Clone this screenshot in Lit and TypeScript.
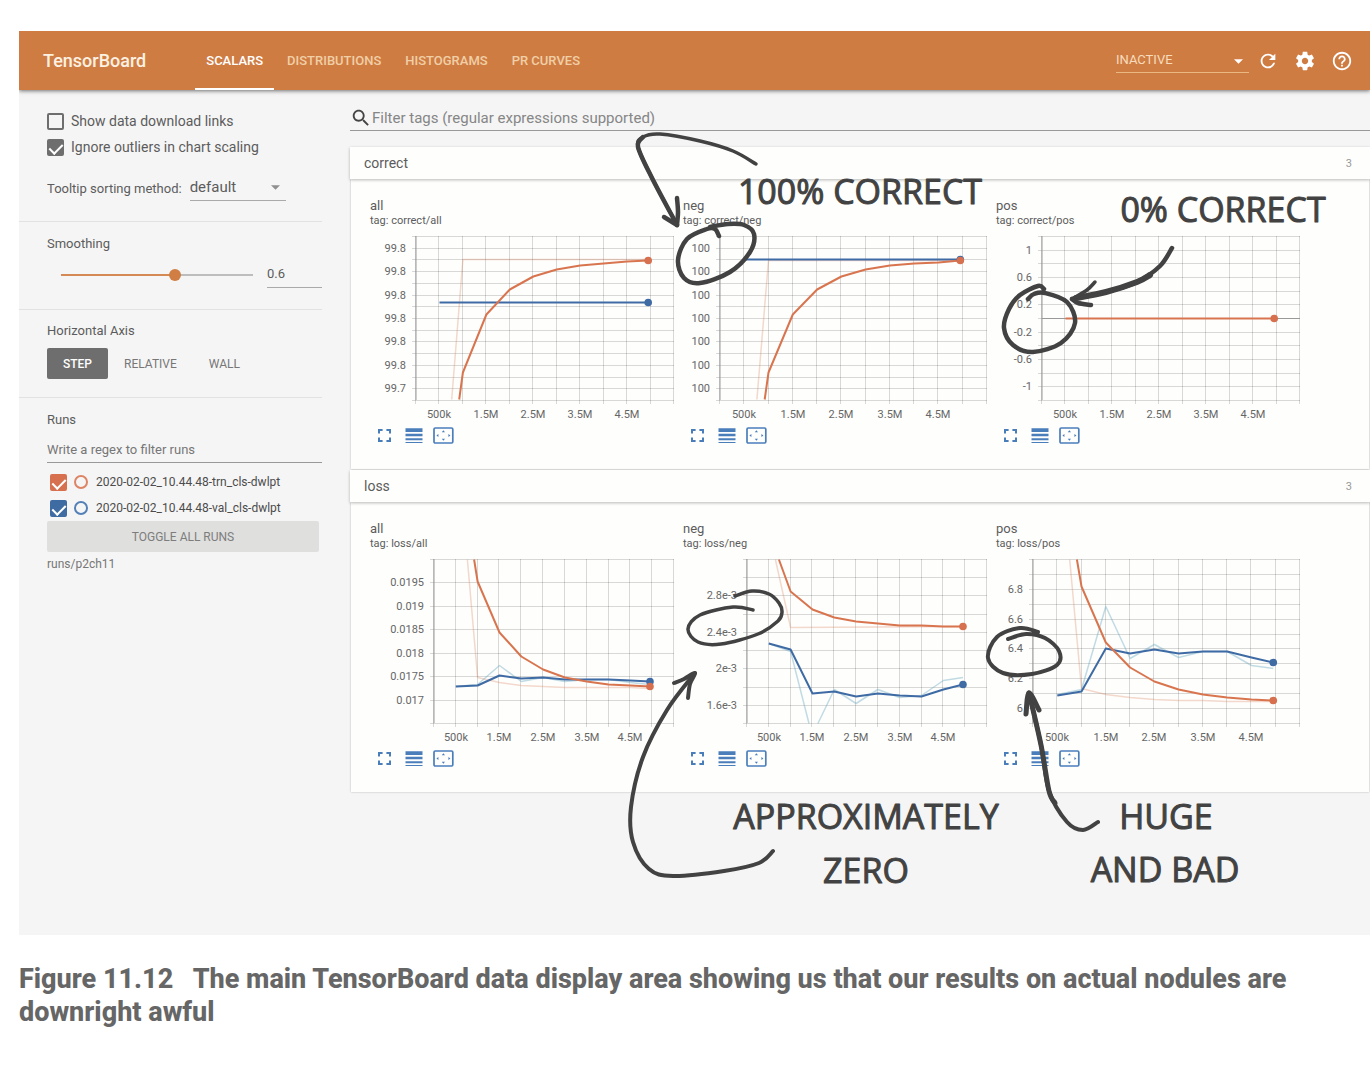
import { LitElement, html, svg, css } from "lit";
import { customElement, property, state } from "lit/decorators.js";
import { classMap } from "lit/directives/class-map.js";

type Pt = [number, number];

interface Line {
  kind: "train" | "val";
  faint?: boolean;
  pts: Pt[];
}

interface ChartSpec {
  name: string;
  left: number;
  steps: number;
  ticks: [number, string][];
  zero?: number;
  lines: Line[];
}

/** Pairs consecutive y values with the step index 1, 2, 3 ... and the last recorded step. */
const run = (first: number, ys: number[]): Pt[] =>
  ys.map((y, i): Pt => [i === ys.length - 1 ? 9.9 : first + i, y]);

const every = (labels: string[], start: number, by: number): [number, string][] =>
  labels.map((l, i): [number, string] => [start + i * by, l]);

const SECTIONS: { title: string; charts: ChartSpec[] }[] = [
  {
    title: "correct",
    charts: [
      {
        name: "all",
        left: 46,
        steps: 14,
        ticks: every(["99.8", "99.8", "99.8", "99.8", "99.8", "99.8", "99.7"], 1, 2),
        lines: [
          { kind: "train", faint: true, pts: [[1.52, 163], [2, 23], [9.9, 23]] },
          { kind: "val", pts: [[1, 66], [9.9, 66]] },
          { kind: "train", pts: [[1.84, 163], ...run(2, [136, 78, 53, 40, 33, 29, 27, 25, 24])] },
        ],
      },
      {
        name: "neg",
        left: 37,
        steps: 14,
        ticks: every(["100", "100", "100", "100", "100", "100", "100"], 1, 2),
        lines: [
          { kind: "train", faint: true, pts: [[1.52, 163], [2, 24], [9.9, 24]] },
          { kind: "val", pts: [[1, 23], [9.9, 23]] },
          { kind: "train", pts: [[1.84, 163], ...run(2, [136, 78, 53, 40, 33, 29, 27, 26, 24])] },
        ],
      },
      {
        name: "pos",
        left: 46,
        steps: 12,
        zero: 82,
        ticks: every(["1", "0.6", "0.2", "-0.2", "-0.6", "-1"], 1, 2),
        lines: [{ kind: "train", pts: [[1, 82], [9.9, 82]] }],
      },
    ],
  },
  {
    title: "loss",
    charts: [
      {
        name: "all",
        left: 64,
        steps: 7,
        ticks: every(["0.0195", "0.019", "0.0185", "0.018", "0.0175", "0.017"], 1, 1),
        lines: [
          { kind: "train", faint: true, pts: [[1.53, 0], ...run(2, [118, 123, 126, 127, 128, 128, 128, 128, 129])] },
          { kind: "val", faint: true, pts: run(1, [127, 125, 106, 122, 118, 122, 120, 120, 123, 125]) },
          { kind: "val", pts: run(1, [127, 126, 116, 119, 118, 120, 120, 120, 121, 122]) },
          { kind: "train", pts: [[1.84, 0], ...run(2, [22, 73, 97, 110, 118, 122, 125, 126, 127])] },
        ],
      },
      {
        name: "neg",
        left: 64,
        steps: 9,
        ticks: every(["2.8e-3", "2.4e-3", "2e-3", "1.6e-3"], 2, 2),
        lines: [
          { kind: "train", faint: true, pts: [[1.3, 0], [2, 68], [9.9, 67]] },
          { kind: "val", faint: true, pts: [[1, 84], [2, 92], [2.84, 164]] },
          { kind: "val", faint: true, pts: [[3.25, 164], ...run(4, [130, 144, 130, 138, 136, 121, 118])] },
          { kind: "val", pts: run(1, [84, 90, 134, 132, 137, 134, 136, 137, 130, 125]) },
          { kind: "train", pts: [[1.46, 0], ...run(2, [32, 50, 58, 62, 64, 66, 66, 67, 67])] },
        ],
      },
      {
        name: "pos",
        left: 37,
        steps: 11,
        ticks: every(["6.8", "6.6", "6.4", "6.2", "6"], 2, 2),
        lines: [
          { kind: "train", faint: true, pts: [[1.51, 0], ...run(2, [129, 135, 138, 140, 141, 141, 142, 142, 142])] },
          { kind: "val", faint: true, pts: run(1, [135, 130, 47, 99, 85, 98, 92, 92, 106, 109]) },
          { kind: "val", pts: run(1, [136, 132, 89, 94, 90, 94, 92, 92, 98, 103]) },
          { kind: "train", pts: [[1.81, 0], ...run(2, [27, 83, 108, 122, 130, 135, 138, 140, 141])] },
        ],
      },
    ],
  },
];

const PLOT_TOP = 4;
const PLOT_HEIGHT = 164;
const PLOT_RIGHT = 304;
const COLUMNS = 11;

@customElement("scalar-chart")
class ScalarChart extends LitElement {
  @property({ attribute: false }) spec!: ChartSpec;
  @property() group = "";

  static styles = css`
    :host { display: block; color: #5c5c5c; }
    .name { font-size: 13px; line-height: 16px; }
    .tag { font-size: 11px; line-height: 14px; margin-bottom: 4px; }
    .plot { display: block; width: 306px; height: 190px; }
    .grid { stroke: #000; stroke-opacity: 0.15; stroke-width: 1; }
    .axis { stroke: #999; stroke-width: 1; }
    .label { font-size: 11px; fill: #666; }
    .line { fill: none; stroke-width: 2; stroke-linejoin: round; }
    .train { stroke: #d8754f; }
    .val { stroke: #3f6ba5; }
    .line.faint { stroke-opacity: 0.28; stroke-width: 1.5; }
    .line.val.faint { stroke: #5fa3bb; stroke-opacity: 0.38; }
    .dot-train { fill: #d6704e; }
    .dot-val { fill: #3f6ba5; }
    .tools { display: flex; gap: 7px; margin: 3px 0 0 4px; }
    .tool { width: 22px; height: 22px; padding: 0; border: 0; background: none; color: #4a7ebb; }
    .tool svg { display: block; }
  `;

  private x(i: number) {
    return this.spec.left + (i * (PLOT_RIGHT - this.spec.left)) / COLUMNS;
  }

  private gridLines() {
    const { steps, left } = this.spec;
    const bottom = PLOT_TOP + PLOT_HEIGHT;
    const rows = Array.from({ length: steps + 1 }, (_, i) => {
      const y = Math.round(PLOT_TOP + (i * PLOT_HEIGHT) / steps) + 0.5;
      return svg`<line class="grid" x1=${left - 4} x2=${PLOT_RIGHT} y1=${y} y2=${y}></line>`;
    });
    const cols = Array.from({ length: COLUMNS + 1 }, (_, i) => {
      const x = Math.round(this.x(i)) - 0.5;
      return svg`<line class="grid" x1=${x} x2=${x} y1=${PLOT_TOP} y2=${bottom + 4}></line>`;
    });
    return [rows, cols];
  }

  render() {
    const { name, left, steps, ticks, zero, lines } = this.spec;
    const ends = lines.filter((l) => !l.faint);
    return html`
      <div class="name">${name}</div>
      <div class="tag">tag: ${this.group}/${name}</div>
      <svg class="plot" viewBox="0 0 306 190" role="img" aria-label="${this.group}/${name}">
        ${this.gridLines()}
        <line class="axis" x1=${left} x2=${left} y1=${PLOT_TOP} y2=${PLOT_TOP + PLOT_HEIGHT}></line>
        ${zero === undefined
          ? null
          : svg`<line class="axis" x1=${left} x2=${PLOT_RIGHT} y1=${zero + PLOT_TOP + 0.5} y2=${zero + PLOT_TOP + 0.5}></line>`}
        ${ticks.map(
          ([t, label]) => svg`<text class="label" text-anchor="end" x=${left - 10}
            y=${Math.round(PLOT_TOP + (t * PLOT_HEIGHT) / steps) + 4}>${label}</text>`,
        )}
        ${["500k", "1.5M", "2.5M", "3.5M", "4.5M"].map(
          (label, i) => svg`<text class="label" text-anchor="middle" x=${Math.round(this.x(1 + 2 * i))} y="186">${label}</text>`,
        )}
        ${lines.map(
          (l) => svg`<polyline class="line ${l.kind} ${l.faint ? "faint" : ""}"
            points=${l.pts.map(([i, y]) => `${this.x(i).toFixed(1)},${y + PLOT_TOP + 0.5}`).join(" ")}></polyline>`,
        )}
        ${ends.map((l) => {
          const [i, y] = l.pts[l.pts.length - 1];
          return svg`<circle class="dot-${l.kind}" cx=${this.x(i)} cy=${y + PLOT_TOP + 0.5} r="3.8"></circle>`;
        })}
      </svg>
      <div class="tools">
        <button class="tool" aria-label="Toggle chart size">
          <svg width="22" height="22" viewBox="0 0 22 22" fill="none" stroke="currentColor" stroke-width="2">
            <path d="M5 8.6V5H8.6M12.4 5H16V8.6M16 12.4V16H12.4M8.6 16H5V12.4"></path>
          </svg>
        </button>
        <button class="tool" aria-label="Toggle log scale">
          <svg width="22" height="22" viewBox="0 0 22 22" fill="currentColor">
            <path d="M2.5 3.2h17v3.7h-17zM2.5 8.7h17v2.6h-17zM2.5 13.3h17v1.9h-17zM2.5 17.1h17v1h-17z"></path>
          </svg>
        </button>
        <button class="tool" aria-label="Fit domain to data">
          <svg width="22" height="22" viewBox="0 0 22 22" fill="currentColor">
            <rect x="2" y="3" width="18.8" height="15" rx="1.2" fill="none" stroke="currentColor" stroke-width="1.7"></rect>
            <path d="M11.4 5.2l1.6 2H9.8zM11.4 15.8l1.6-2H9.8zM4.4 10.5l2-1.6v3.2zM18.4 10.5l-2-1.6v3.2z"></path>
          </svg>
        </button>
      </div>
    `;
  }
}

/** Smooth pen stroke through a list of points (Catmull-Rom as cubic segments). */
const stroke = (p: Pt[]) => {
  let d = `M${p[0][0]} ${p[0][1]}`;
  for (let i = 0; i < p.length - 1; i++) {
    const a = p[i - 1] ?? p[i];
    const b = p[i];
    const c = p[i + 1];
    const e = p[i + 2] ?? c;
    d += `C${b[0] + (c[0] - a[0]) / 6} ${b[1] + (c[1] - a[1]) / 6} ${c[0] - (e[0] - b[0]) / 6} ${c[1] - (e[1] - b[1]) / 6} ${c[0]} ${c[1]}`;
  }
  return d;
};

const PEN: { w: number; pts: Pt[] }[] = [
  { w: 3.5, pts: [[756, 164], [733, 151], [700, 141], [660, 134], [643, 137], [638, 147], [652, 178], [677, 225]] },
  { w: 4.5, pts: [[643, 137], [638, 147], [652, 178], [677, 225]] },
  { w: 4.5, pts: [[677, 198], [678, 212], [677, 225]] },
  { w: 4.5, pts: [[664, 217], [677, 225]] },
  { w: 4.5, pts: [[719, 236], [715, 229], [707, 229], [687, 239], [678, 260], [684, 278], [700, 283], [730, 272], [750, 252], [754, 234], [744, 225], [728, 224], [710, 227]] },
  { w: 4.5, pts: [[1172, 248], [1160, 266], [1137, 282], [1106, 292], [1072, 299]] },
  { w: 6, pts: [[1150, 275], [1137, 282], [1106, 292], [1076, 298]] },
  { w: 3.5, pts: [[1095, 282], [1087, 290], [1072, 299]] },
  { w: 4.5, pts: [[1091, 305], [1078, 303], [1072, 299]] },
  { w: 4.5, pts: [[1044, 289], [1038, 286], [1020, 295], [1009, 309], [1004, 328], [1013, 345], [1033, 352], [1061, 343], [1075, 323], [1067, 302], [1045, 293], [1034, 294], [1028, 299]] },
  { w: 3.5, pts: [[753, 610], [733, 607], [700, 615], [688, 629], [698, 642], [721, 644], [758, 634], [778, 621], [782, 612], [779, 603], [769, 594], [752, 591], [735, 596]] },
  { w: 4, pts: [[773, 851], [759, 863], [724, 871], [673, 876], [649, 869], [633, 842], [631, 807], [643, 757], [667, 710], [695, 673]] },
  { w: 4, pts: [[674, 683], [684, 679], [695, 673], [690, 684], [688, 698]] },
  { w: 4, pts: [[1038, 632], [1020, 628], [997, 637], [988, 658], [1003, 673], [1032, 674], [1057, 665], [1059, 651], [1045, 638], [1026, 634], [1008, 639]] },
  { w: 4, pts: [[1098, 822], [1083, 830], [1067, 822], [1049, 791], [1041, 745], [1029, 693]] },
  { w: 5, pts: [[1055, 803], [1049, 791], [1041, 745], [1029, 693]] },
  { w: 5, pts: [[1026, 714], [1029, 693], [1039, 710]] },
];

const NOTES: [number, number, string][] = [
  [860, 204, "100% CORRECT"],
  [1223, 222, "0% CORRECT"],
  [866, 829, "APPROXIMATELY"],
  [866, 883, "ZERO"],
  [1166, 829, "HUGE"],
  [1165, 882, "AND BAD"],
];

@customElement("app-root")
class AppRoot extends LitElement {
  @state() private tab = "SCALARS";
  @state() private axis = "STEP";
  @state() private smoothing = 0.6;

  static styles = css`
    * { box-sizing: border-box; }
    :host { display: block; box-sizing: border-box; min-height: 100vh; padding: 31px 0 24px 19px; background: #fff; overflow: hidden; font-family: Roboto, "Liberation Sans", sans-serif; color: #5c5c5c; }
    button, input, select { font-family: inherit; color: inherit; margin: 0; outline-offset: 2px; }
    .figure { margin: 0; }
    .board { position: relative; background: #f5f5f5; padding-bottom: 142px; overflow: hidden; }
    .bar { display: flex; align-items: center; height: 59px; padding: 0 17px 0 24px; background: #cf7c43; box-shadow: 0 1px 4px rgba(0, 0, 0, 0.55); color: #fff; position: relative; }
    .brand { margin: 0 49px 0 0; font-size: 18px; font-weight: 500; color: #fdf1e2; }
    .tabs { display: flex; gap: 2px; align-self: stretch; flex: 1; }
    .tab { border: 0; border-bottom: 2px solid transparent; padding: 2px 11px 0; background: none; font-size: 13px; font-weight: 500; color: #f0cfa6; }
    .tab.on { color: #fff; border-bottom-color: #fff; }
    .reload { position: relative; margin-right: 8px; }
    .reload select { display: block; appearance: none; width: 133px; height: 24px; padding: 0 0 2px; border: 0; border-bottom: 1px solid #eab983; border-radius: 0; background: none; font-size: 13px; color: #f6dcbc; }
    .caret { position: absolute; right: 6px; top: 10px; width: 9px; height: 5px; pointer-events: none; fill: currentColor; }
    .actions { display: flex; gap: 15px; }
    .icon { width: 22px; height: 22px; padding: 0; border: 0; background: none; }
    .icon svg { display: block; fill: #fff; }
    .body { display: flex; align-items: flex-start; }
    .side { width: 303px; flex: none; }
    .block { padding-left: 28px; border-bottom: 1px solid #e2e2e0; }
    .block.options { padding-top: 18px; padding-bottom: 20px; }
    .block.smooth { padding-top: 13px; padding-bottom: 21px; }
    .block.axis { padding-top: 12px; padding-bottom: 18px; }
    .block.runs { padding-top: 13px; border-bottom: 0; }
    .check { display: flex; align-items: center; gap: 7px; height: 26px; font-size: 14px; }
    .box { appearance: none; display: grid; place-items: center; width: 17px; height: 17px; border: 2px solid #6e6e6e; border-radius: 2px; background: none; }
    .box:checked { background: #6e6e6e; }
    .box:checked::after { content: ""; width: 6px; height: 11px; margin-bottom: 3px; border: solid #fff; border-width: 0 2px 2px 0; rotate: 45deg; }
    .box.train:checked { background: #d6704e; border-color: #d6704e; }
    .box.val:checked { background: #3f6ba3; border-color: #3f6ba3; }
    .sort { display: flex; align-items: center; gap: 8px; margin-top: 15px; font-size: 13px; }
    .sort .pick { position: relative; color: #8f8f8f; }
    .sort select { display: block; appearance: none; width: 96px; height: 26px; padding: 0 0 2px; border: 0; border-bottom: 1px solid #aaa; border-radius: 0; background: none; font-size: 15px; color: #5c5c5c; }
    .label { display: block; margin: 0; font-size: 13px; font-weight: 400; line-height: 18px; }
    .slide { display: flex; align-items: center; justify-content: space-between; height: 26px; margin-top: 9px; padding-left: 14px; }
    .range { appearance: none; width: 192px; height: 12px; background: linear-gradient(#d58a55, #d58a55) 0 5px / var(--fill) 2px no-repeat, linear-gradient(#bdbdbd, #bdbdbd) 0 5px / 100% 2px no-repeat; }
    .range::-webkit-slider-thumb { appearance: none; width: 12px; height: 12px; border-radius: 50%; background: #d07e44; }
    .number { appearance: textfield; width: 55px; height: 26px; padding: 0 0 2px; border: 0; border-bottom: 1px solid #aaa; background: none; font-size: 13px; }
    .modes { display: flex; margin-top: 8px; }
    .mode { height: 31px; padding: 0 16px; border: 0; border-radius: 2px; background: none; font-size: 12px; color: #777; }
    .mode.on { background: #6e6e6e; color: #fff; font-weight: 500; }
    .regex { display: block; width: 100%; height: 26px; margin: 8px 0 6px; padding: 0; border: 0; border-bottom: 1px solid #999; background: none; font-size: 13px; }
    .regex::placeholder { color: #777; }
    .run { display: flex; align-items: center; gap: 7px; height: 26px; padding-left: 3px; font-size: 12px; color: #4c4c4c; }
    .ring { width: 14px; height: 14px; margin-right: 1px; border: 2px solid #dd8465; border-radius: 50%; }
    .ring.val { border-color: #5480b8; }
    .toggle { display: block; width: calc(100% - 3px); height: 31px; border: 0; border-radius: 2px; background: #dfdfde; font-size: 12px; color: #7d7d7d; }
    .path { margin: 3px 0 0; font-size: 12px; line-height: 18px; color: #777; }
    .main { flex: 1; min-width: 0; padding: 15px 0 0 28px; }
    .filter { display: flex; align-items: center; height: 26px; margin-bottom: 16px; border-bottom: 1px solid #999; }
    .filter svg { flex: none; fill: #444; }
    .filter input { flex: 1; min-width: 0; height: 25px; padding: 0; border: 0; background: none; font-size: 15px; }
    .filter input::placeholder { color: #868686; }
    .group { margin-bottom: 1px; }
    .head { display: flex; align-items: center; justify-content: space-between; width: 100%; height: 32px; padding: 0 18px 0 14px; border: 0; background: #fefefd; box-shadow: 0 1px 3px rgba(0, 0, 0, 0.28); font-size: 14px; text-align: left; position: relative; }
    .count { font-size: 11px; color: #999; }
    .cards { display: grid; grid-template-columns: repeat(auto-fill, 306px); gap: 7px; margin: 0 1px; padding: 19px 19px 22px; background: #fefefd; box-shadow: 0 0 2px rgba(0, 0, 0, 0.25); }
    .pen { position: absolute; top: 0; left: 0; width: 1351px; height: 903px; pointer-events: none; }
    .ink { fill: none; stroke: #424242; stroke-linecap: round; stroke-linejoin: round; }
    .note { font-family: "Open Sans", sans-serif; font-size: 34px; fill: #424242; stroke: #424242; stroke-width: 1; stroke-linejoin: round; text-anchor: middle; }
    .caption { margin: 28px 0 0; padding-right: 60px; font-size: 27px; line-height: 33px; font-weight: 800; color: #666; white-space: pre-wrap; }
  `;

  render() {
    return html`
      <figure class="figure">
        <div class="board">
          <header class="bar">
            <h1 class="brand">TensorBoard</h1>
            <nav class="tabs">
              ${["SCALARS", "DISTRIBUTIONS", "HISTOGRAMS", "PR CURVES"].map(
                (t) => html`<button class=${classMap({ tab: true, on: t === this.tab })} @click=${() => (this.tab = t)}>${t}</button>`,
              )}
            </nav>
            <div class="reload">
              <select aria-label="Inactive dashboards"><option>INACTIVE</option></select>
              <svg class="caret" viewBox="0 0 10 5"><path d="M0 0h10L5 5z"></path></svg>
            </div>
            <div class="actions">
              <button class="icon" aria-label="Reload">
                <svg width="22" height="22" viewBox="0 0 24 24"><path d="M17.65 6.35C16.2 4.9 14.21 4 12 4c-4.42 0-7.99 3.58-7.99 8s3.57 8 7.99 8c3.73 0 6.84-2.55 7.73-6h-2.08c-.82 2.33-3.04 4-5.65 4-3.31 0-6-2.69-6-6s2.69-6 6-6c1.66 0 3.14.69 4.22 1.78L13 11h7V4l-2.35 2.35z"></path></svg>
              </button>
              <button class="icon" aria-label="Settings">
                <svg width="22" height="22" viewBox="0 0 24 24"><path d="M19.43 12.98c.04-.32.07-.64.07-.98s-.03-.66-.07-.98l2.11-1.65c.19-.15.24-.42.12-.64l-2-3.46c-.12-.22-.39-.3-.61-.22l-2.49 1c-.52-.4-1.08-.73-1.69-.98l-.38-2.65C14.46 2.18 14.25 2 14 2h-4c-.25 0-.46.18-.49.42l-.38 2.65c-.61.25-1.17.59-1.69.98l-2.49-1c-.23-.09-.49 0-.61.22l-2 3.46c-.13.22-.07.49.12.64l2.11 1.65c-.04.32-.07.65-.07.98s.03.66.07.98l-2.11 1.65c-.19.15-.24.42-.12.64l2 3.46c.12.22.39.3.61.22l2.49-1c.52.4 1.08.73 1.69.98l.38 2.65c.03.24.24.42.49.42h4c.25 0 .46-.18.49-.42l.38-2.65c.61-.25 1.17-.59 1.69-.98l2.49 1c.23.09.49 0 .61-.22l2-3.46c.12-.22.07-.49-.12-.64l-2.11-1.65zM12 15.5c-1.93 0-3.5-1.57-3.5-3.5s1.57-3.5 3.5-3.5 3.5 1.57 3.5 3.5-1.57 3.5-3.5 3.5z"></path></svg>
              </button>
              <button class="icon" aria-label="Help">
                <svg width="22" height="22" viewBox="0 0 24 24"><path d="M11 18h2v-2h-2v2zm1-16C6.48 2 2 6.48 2 12s4.48 10 10 10 10-4.48 10-10S17.52 2 12 2zm0 18c-4.41 0-8-3.59-8-8s3.59-8 8-8 8 3.59 8 8-3.59 8-8 8zm0-14c-2.21 0-4 1.79-4 4h2c0-1.1.9-2 2-2s2 .9 2 2c0 2-3 1.75-3 5h2c0-2.25 3-2.5 3-5 0-2.21-1.79-4-4-4z"></path></svg>
              </button>
            </div>
          </header>
          <div class="body">
            <aside class="side">
              <section class="block options">
                <label class="check"><input class="box" type="checkbox" />Show data download links</label>
                <label class="check"><input class="box" type="checkbox" checked />Ignore outliers in chart scaling</label>
                <div class="sort">
                  <label for="sort">Tooltip sorting method:</label>
                  <div class="pick">
                    <select id="sort"><option>default</option></select>
                    <svg class="caret" viewBox="0 0 10 5"><path d="M0 0h10L5 5z"></path></svg>
                  </div>
                </div>
              </section>
              <section class="block smooth">
                <label class="label" for="smoothing">Smoothing</label>
                <div class="slide">
                  <input id="smoothing" class="range" type="range" min="0" max="1" step="0.1" .value=${String(this.smoothing)}
                    style="--fill: ${this.smoothing * 100}%"
                    @input=${(e: Event) => (this.smoothing = Number((e.target as HTMLInputElement).value))} />
                  <input class="number" type="number" aria-label="Smoothing value" .value=${String(this.smoothing)} />
                </div>
              </section>
              <section class="block axis">
                <h2 class="label">Horizontal Axis</h2>
                <div class="modes">
                  ${["STEP", "RELATIVE", "WALL"].map(
                    (m) => html`<button class=${classMap({ mode: true, on: m === this.axis })} @click=${() => (this.axis = m)}>${m}</button>`,
                  )}
                </div>
              </section>
              <section class="block runs">
                <label class="label" for="regex">Runs</label>
                <input id="regex" class="regex" type="text" placeholder="Write a regex to filter runs" />
                <label class="run"><input class="box train" type="checkbox" checked /><span class="ring"></span>2020-02-02_10.44.48-trn_cls-dwlpt</label>
                <label class="run"><input class="box val" type="checkbox" checked /><span class="ring val"></span>2020-02-02_10.44.48-val_cls-dwlpt</label>
                <button class="toggle">TOGGLE ALL RUNS</button>
                <p class="path">runs/p2ch11</p>
              </section>
            </aside>
            <main class="main">
              <div class="filter">
                <svg width="22" height="22" viewBox="0 0 24 24"><path d="M15.5 14h-.79l-.28-.27C15.41 12.59 16 11.11 16 9.5 16 5.91 13.09 3 9.5 3S3 5.91 3 9.5 5.91 16 9.5 16c1.61 0 3.09-.59 4.23-1.57l.27.28v.79l5 4.99L20.49 19l-4.99-5zm-6 0C7.01 14 5 11.99 5 9.5S7.01 5 9.5 5 14 7.01 14 9.5 11.99 14 9.5 14z"></path></svg>
                <input type="text" aria-label="Filter tags" placeholder="Filter tags (regular expressions supported)" />
              </div>
              ${SECTIONS.map(
                (s) => html`
                  <section class="group">
                    <button class="head"><span>${s.title}</span><span class="count">${s.charts.length}</span></button>
                    <div class="cards">
                      ${s.charts.map((c) => html`<scalar-chart .spec=${c} group=${s.title}></scalar-chart>`)}
                    </div>
                  </section>
                `,
              )}
            </main>
          </div>
          <svg class="pen" viewBox="19 31 1351 903">
            ${PEN.map((p) => svg`<path class="ink" stroke-width=${p.w} d=${stroke(p.pts)}></path>`)}
            ${NOTES.map(([x, y, t]) => svg`<text class="note" x=${x} y=${y}>${t}</text>`)}
          </svg>
        </div>
        <figcaption class="caption">Figure 11.12   The main TensorBoard data display area showing us that our results on actual nodules are downright awful</figcaption>
      </figure>
    `;
  }
}
